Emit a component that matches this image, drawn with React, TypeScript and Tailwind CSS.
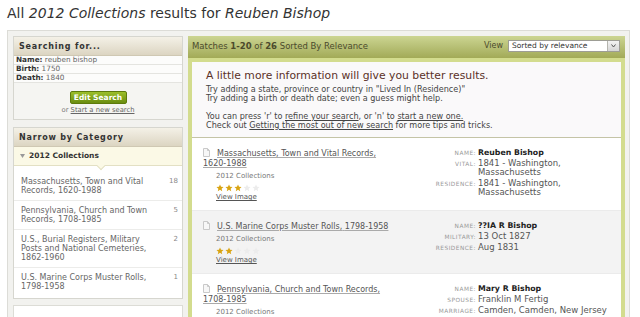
import React from "react";

type Result = {
  title: string;
  stars: number;
  fields: [string, string][];
  shaded?: boolean;
};

const results: Result[] = [
  {
    title: "Massachusetts, Town and Vital Records, 1620-1988",
    stars: 3,
    fields: [
      ["Name", "Reuben Bishop"],
      ["Vital", "1841 - Washington, Massachusetts"],
      ["Residence", "1841 - Washington, Massachusetts"],
    ],
  },
  {
    title: "U.S. Marine Corps Muster Rolls, 1798-1958",
    stars: 2,
    shaded: true,
    fields: [
      ["Name", "??IA R Bishop"],
      ["Military", "13 Oct 1827"],
      ["Residence", "Aug 1831"],
    ],
  },
  {
    title: "Pennsylvania, Church and Town Records, 1708-1985",
    stars: 3,
    fields: [
      ["Name", "Mary R Bishop"],
      ["Spouse", "Franklin M Fertig"],
      ["Marriage", "Camden, Camden, New Jersey"],
    ],
  },
];

const categories = [
  { name: "Massachusetts, Town and Vital Records, 1620-1988", count: 18 },
  { name: "Pennsylvania, Church and Town Records, 1708-1985", count: 5 },
  { name: "U.S., Burial Registers, Military Posts and National Cemeteries, 1862-1960", count: 2 },
  { name: "U.S. Marine Corps Muster Rolls, 1798-1958", count: 1 },
];

function DocIcon() {
  return (
    <svg width="7" height="9" viewBox="0 0 7 9" className="mr-[7px] inline-block align-[-1px]">
      <path d="M0.5 0.5h4l2 2v6h-6z" fill="#f7f7f7" stroke="#c9c9c9" />
      <path d="M4.5 0.5v2h2" fill="none" stroke="#c9c9c9" />
    </svg>
  );
}

function Stars({ n }: { n: number }) {
  return (
    <div className="flex gap-[1px]">
      {[0, 1, 2, 3, 4].map((i) => (
        <svg key={i} width="8" height="8" viewBox="0 0 24 24">
          <path
            d="M12 1.5l3.1 6.9 7.4.7-5.6 5 1.7 7.4L12 17.6 5.4 21.5l1.7-7.4-5.6-5 7.4-.7z"
            fill={i < n ? "#d9a412" : "#ececec"}
          />
        </svg>
      ))}
    </div>
  );
}

function PanelHeader({ children }: { children: React.ReactNode }) {
  return (
    <div className="flex h-[19px] shrink-0 items-center border-b border-[#cfc8b3] bg-gradient-to-b from-[#f4f1e7] to-[#dcd5c2] pl-[5px] pt-[2px] text-[8px] font-bold tracking-[0.8px] text-[#333]">
      {children}
    </div>
  );
}

export default function App() {
  return (
    <div className="h-[317px] w-[640px] overflow-hidden bg-white font-['DejaVu_Sans',sans-serif] text-[#444]">
      <h1 className="h-[30px] pl-[7px] pt-[3px] text-[14px] leading-[20px] text-[#333]">
        All <i>2012 Collections</i> results for <i>Reuben Bishop</i>
      </h1>

      <div className="ml-[7px] flex w-[623px] items-start gap-[5px] border border-[#dcdcd7] bg-[#f2f2ef] pl-[5px] pt-[5px]">
        {/* left column */}
        <aside className="flex w-[170px] shrink-0 flex-col">
          <div className="shrink-0 border border-[#d6d6cf] bg-[#f5f5f2]">
            <PanelHeader>Searching for...</PanelHeader>
            {[
              ["Name:", "reuben bishop"],
              ["Birth:", "1750"],
              ["Death:", "1840"],
            ].map(([k, v]) => (
              <div key={k} className="h-[9px] border-b border-[#e4e4e0] bg-[#fcfcfb] pl-[2px] text-[7.3px] leading-[8px]">
                <b className="text-[#333]">{k}</b> <span className="text-[#666]">{v}</span>
              </div>
            ))}
            <div className="flex flex-col items-center pb-[4px] pt-[8px]">
              <div className="flex h-[13px] w-[57px] items-center justify-center rounded-[2px] border border-[#5d7a0c] bg-gradient-to-b from-[#9cbf2a] to-[#6a8d10] text-[7.5px] font-bold text-white">
                Edit Search
              </div>
              <div className="mt-[2px] text-[6.8px] leading-[9px] text-[#777]">
                or <span className="text-[#666] underline">Start a new search</span>
              </div>
            </div>
          </div>

          <div className="mt-[7px] h-[172px] shrink-0 border border-[#d6d6cf] bg-white">
            <PanelHeader>Narrow by Category</PanelHeader>
            <div className="relative flex h-[19px] items-center gap-[4px] border-b border-[#e3e0c4] bg-[#fbf9e6] pl-[6px] text-[7.5px] font-bold text-[#333]">
              <svg width="5" height="4" viewBox="0 0 5 4">
                <path d="M0 0h5L2.5 4z" fill="#999" />
              </svg>
              2012 Collections
              <span className="absolute bottom-[-4px] left-[84px] h-[6px] w-[6px] rotate-45 border-b border-r border-[#e3e0c4] bg-[#fbf9e6]" />
            </div>
            <div className="pt-[6px]">
              {categories.map((c, i) => (
                <div
                  key={c.name}
                  className={`flex justify-between py-[5px] pl-[7px] pr-[4px] ${i < categories.length - 1 ? "border-b border-[#ececea]" : ""}`}
                >
                  <div className="w-[135px] text-[8px] leading-[9px] text-[#666]">{c.name}</div>
                  <div className="text-[7px] leading-[9px] text-[#888]">{c.count}</div>
                </div>
              ))}
            </div>
          </div>

          <div className="mt-[6px] h-[40px] shrink-0 border border-[#dcdcd6] bg-white" />
        </aside>

        {/* results */}
        <section className="flex w-[437px] shrink-0 flex-col">
          <div className="flex h-[22px] shrink-0 items-center justify-between bg-gradient-to-b from-[#ccd592] to-[#a2aa57] pb-[2px] pl-[4px] pr-[5px]">
            <div className="text-[8.5px] text-[#4b4a2c]">
              Matches <b>1-20</b> of <b>26</b> Sorted By Relevance
            </div>
            <div className="flex items-center gap-[5px]">
              <span className="text-[8px] text-[#4b4a2c]">View</span>
              <div className="flex h-[12px] w-[112px] items-center border border-[#9d9d95] bg-white">
                <span className="flex-1 pl-[3px] text-[7.5px] text-[#333]">Sorted by relevance</span>
                <span className="flex h-full w-[12px] items-center justify-center border-l border-[#b5b5ae] bg-gradient-to-b from-[#f3f3f3] to-[#d6d6d6]">
                  <svg width="5" height="4" viewBox="0 0 5 4">
                    <path d="M0.5 0.5l2 2.5 2-2.5" fill="none" stroke="#555" strokeWidth="1" />
                  </svg>
                </span>
              </div>
            </div>
          </div>

          <div className="bg-[#d3dc8e] px-[4px] pt-[4px]">
            <div className="border-b border-[#c4c4a6] bg-[#faf9fa] pb-[8px] pl-[14px] pt-[8px]">
              <p className="text-[10.8px] leading-[12px] text-[#5b3128]">
                A little more information will give you better results.
              </p>
              <p className="mt-[3px] text-[8.1px] leading-[8.5px] text-[#444]">
                Try adding a state, province or country in "Lived In (Residence)"
                <br />
                Try adding a birth or death date; even a guess might help.
              </p>
              <p className="mt-[10px] text-[8.1px] leading-[8.5px] text-[#444]">
                You can press 'r' to <span className="underline">refine your search</span>, or 'n' to{" "}
                <span className="underline">start a new one.</span>
                <br />
                Check out <span className="underline">Getting the most out of new search</span> for more tips and tricks.
              </p>
            </div>

            {results.map((r) => {
              const cut = r.title.lastIndexOf(" ");
              return (
                <div
                  key={r.title}
                  className={`flex border-b border-[#ebebeb] pb-[8px] pl-[11px] pt-[10px] ${r.shaded ? "bg-[#f3f3f3]" : "bg-white"}`}
                >
                  <div className="w-[200px] shrink-0">
                    <div className="text-[8px] leading-[10px] text-[#555] underline decoration-[#aaa]">
                      <DocIcon />
                      {r.title.slice(0, cut)}{" "}
                      <span className="whitespace-nowrap">{r.title.slice(cut + 1)}</span>
                    </div>
                    <div className="pl-[13px]">
                      <div className="mt-[2.5px] text-[7px] leading-[9px] text-[#777]">2012 Collections</div>
                      <div className="mt-[3px]">
                        <Stars n={r.stars} />
                      </div>
                      <div className="mt-[1.5px] text-[7px] leading-[9px] text-[#555] underline">View Image</div>
                    </div>
                  </div>
                  <div className="flex flex-col gap-[1.5px]">
                    {r.fields.map(([label, value], i) => (
                      <div key={label} className="flex items-baseline gap-[2px]">
                        <span className="w-[73px] shrink-0 text-right text-[5.8px] uppercase tracking-[0.5px] text-[#999]">
                          {label}:
                        </span>
                        <span
                          className={`w-[140px] leading-[9px] ${i === 0 ? "text-[7.8px] font-bold text-[#222]" : "text-[8.5px] text-[#555]"}`}
                        >
                          {value}
                        </span>
                      </div>
                    ))}
                  </div>
                </div>
              );
            })}
          </div>
        </section>
      </div>
    </div>
  );
}
